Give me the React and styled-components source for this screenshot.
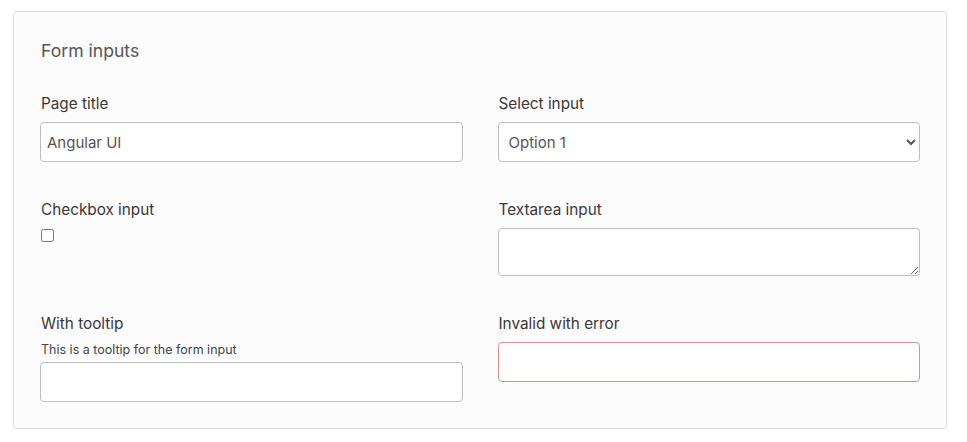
import React from "react";
import styled, { createGlobalStyle } from "styled-components";

const GlobalStyle = createGlobalStyle`
body {
  margin: 0;
  background: #fff;
  font-family: Inter, "Noto Sans", sans-serif;
}
`;

const Page = styled.div`
  padding: 11px 20px 0 13px;
`;

const Card = styled.div`
  background: #fcfcfc;
  border: 1px solid #dcdcdc;
  border-radius: 4px;
  padding: 26px;
`;

const Title = styled.h2`
  margin: 1px 0 31px 1px;
  font-size: 17.6px;
  line-height: 24px;
  font-weight: 400;
  color: #555;
`;

const Grid = styled.div`
  display: grid;
  grid-template-columns: 1fr 1fr;
  column-gap: 35px;
  row-gap: 38px;
  align-items: start;
`;

const Field = styled.div`
  display: flex;
  flex-direction: column;
`;

const Label = styled.label`
  display: block;
  font-size: 15.3px;
  line-height: 20px;
  color: #383838;
  margin: 0 0 8px 1px;
`;

const Hint = styled.div`
  font-size: 12.5px;
  line-height: 16px;
  color: #444;
  margin: 0 0 4px 1px;
`;

const TextInput = styled.input`
  box-sizing: border-box;
  height: 40px;
  width: 100%;
  padding: 0 6px;
  font-family: inherit;
  font-size: 15px;
  color: #555;
  background: #fff;
  border: 1px solid ${({ $invalid }) => ($invalid ? "#e0908a" : "#bdbdbd")};
  border-radius: 4px;
  outline: none;
`;

const Select = styled.select`
  box-sizing: border-box;
  height: 40px;
  width: 100%;
  padding: 0 6px;
  font-family: inherit;
  font-size: 15px;
  color: #555;
  background: #fff;
  border: 1px solid #bdbdbd;
  border-radius: 4px;
  outline: none;
`;

const TextArea = styled.textarea`
  box-sizing: border-box;
  height: 48px;
  width: 100%;
  display: block;
  font-family: inherit;
  font-size: 15px;
  background: #fff;
  border: 1px solid #bdbdbd;
  border-radius: 4px;
  outline: none;
`;

const CheckRow = styled.div`
  display: flex;
  height: 13px;
`;

const Checkbox = styled.input`
  margin: 1px 0 0 1px;
  width: 13px;
  height: 13px;
`;

export default function App() {
  return (
    <Page>
      <GlobalStyle />
      <Card>
        <Title>Form inputs</Title>
        <Grid>
          <Field>
            <Label>Page title</Label>
            <TextInput defaultValue="Angular UI" />
          </Field>
          <Field>
            <Label>Select input</Label>
            <Select defaultValue="1">
              <option value="1">Option 1</option>
              <option value="2">Option 2</option>
            </Select>
          </Field>
          <Field>
            <Label>Checkbox input</Label>
            <CheckRow>
              <Checkbox type="checkbox" />
            </CheckRow>
          </Field>
          <Field>
            <Label>Textarea input</Label>
            <TextArea />
          </Field>
          <Field>
            <Label>With tooltip</Label>
            <Hint>This is a tooltip for the form input</Hint>
            <TextInput />
          </Field>
          <Field>
            <Label>Invalid with error</Label>
            <TextInput $invalid />
          </Field>
        </Grid>
      </Card>
    </Page>
  );
}
